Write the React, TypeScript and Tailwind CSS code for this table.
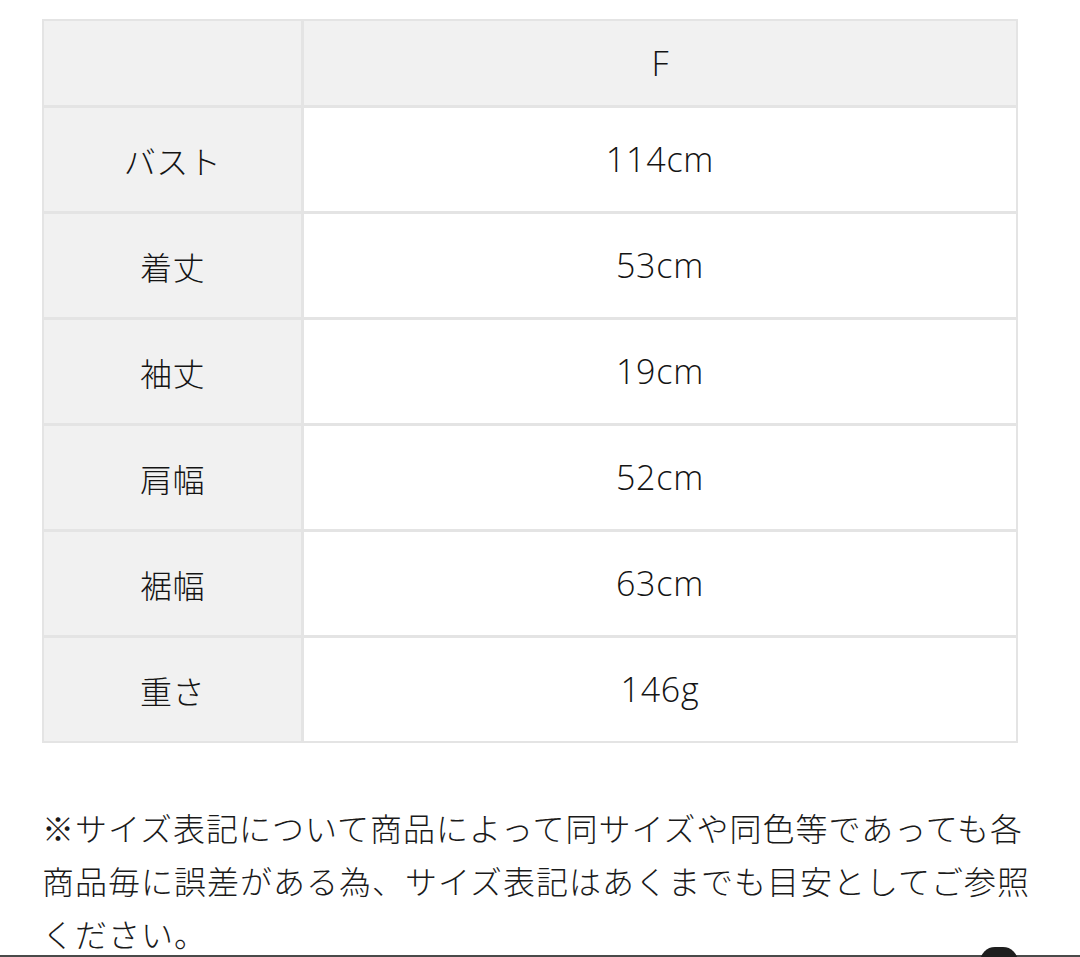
import React from "react";

const rows: [string, string][] = [
  ["バスト", "114cm"],
  ["着丈", "53cm"],
  ["袖丈", "19cm"],
  ["肩幅", "52cm"],
  ["裾幅", "63cm"],
  ["重さ", "146g"],
];

const jp = { fontFamily: '"Noto Sans CJK JP", "Noto Sans", sans-serif' };
const lat = { fontFamily: '"Open Sans", "Noto Sans CJK JP", sans-serif' };

export default function App() {
  return (
    <div className="relative h-[957px] w-[1080px] overflow-hidden bg-white text-[#141414]">
      <div className="pl-[42px] pt-[19px]">
        <div className="grid w-[976px] grid-cols-[257px_1fr] gap-[3px] bg-[#e4e4e4] p-[2px]">
          <div className="h-[84px] bg-[#f1f1f1]" />
          <div className="flex h-[84px] items-center justify-center bg-[#f1f1f1] text-[34px] font-light" style={lat}>
            F
          </div>
          {rows.map(([k, v]) => (
            <React.Fragment key={k}>
              <div className="flex h-[103px] items-center justify-center bg-[#f1f1f1] text-[32px] font-light tracking-[0.5px]" style={jp}>
                {k}
              </div>
              <div className="flex h-[103px] items-center justify-center bg-white text-[34px] font-light tracking-[0.8px]" style={lat}>
                {v}
              </div>
            </React.Fragment>
          ))}
        </div>
        <div className="mt-[58px] text-[32px] font-light leading-[53px] tracking-[1px] text-[#1a1a1a]" style={jp}>
          <div className="whitespace-nowrap">※サイズ表記について商品によって同サイズや同色等であっても各</div>
          <div className="whitespace-nowrap">商品毎に誤差がある為、サイズ表記はあくまでも目安としてご参照</div>
          <div className="whitespace-nowrap">ください。</div>
        </div>
      </div>
      <div className="absolute bottom-0 left-0 h-[2px] w-full bg-[#4a4a4a]" />
      <div className="absolute left-[980px] top-[947px] h-[30px] w-[38px] rounded-full bg-[#1e1e1e]" />
    </div>
  );
}
